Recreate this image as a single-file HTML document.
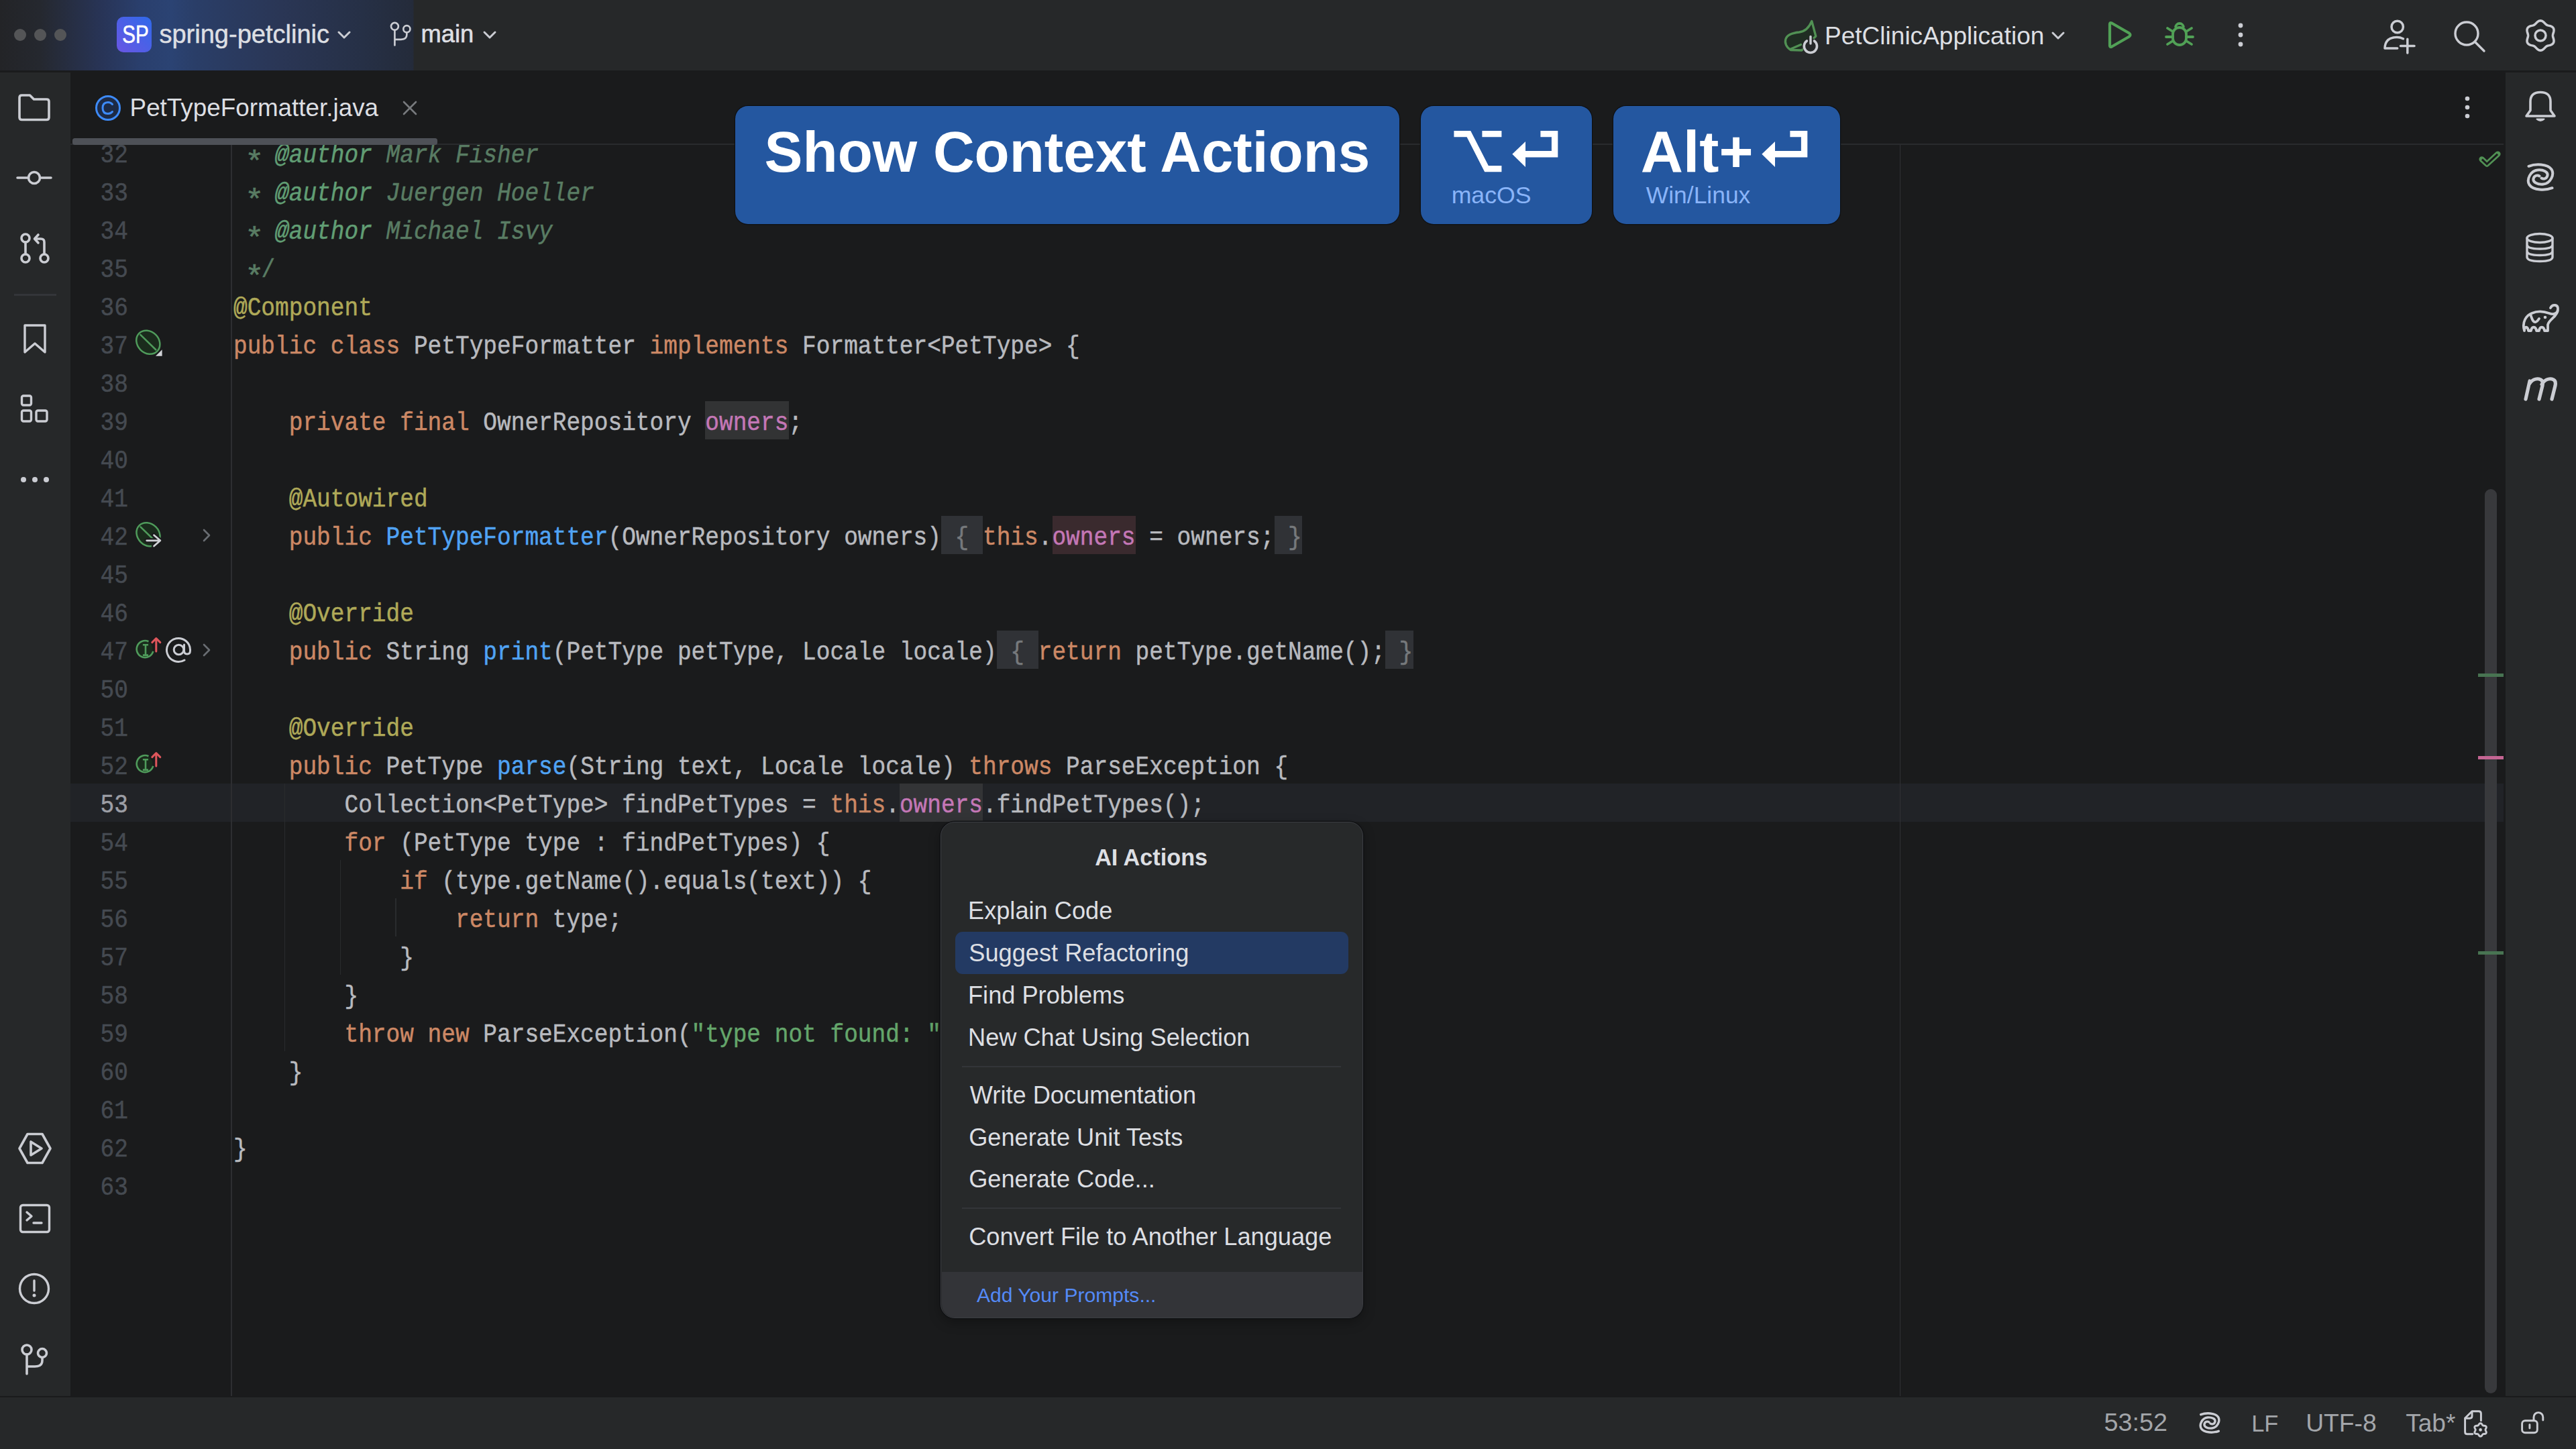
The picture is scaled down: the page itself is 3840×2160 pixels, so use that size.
<!DOCTYPE html>
<html><head><meta charset="utf-8"><title>IntelliJ IDEA - AI Actions</title>
<style>
html,body{margin:0;padding:0;width:3840px;height:2160px;overflow:hidden;background:#1a1b1c;}
.b{position:absolute;}
.t{position:absolute;white-space:pre;font-family:"Liberation Sans",sans-serif;}
.mono{font-family:"Liberation Mono",monospace;font-size:34.478px;line-height:57px;transform:scaleY(1.1);transform-origin:0 37.68px;-webkit-text-stroke:0.45px currentColor;}
.ic{position:absolute;overflow:visible;}
</style></head><body>
<div class="b" style="left:0px;top:0px;width:3840px;height:105px;background:#262829;"></div>
<div class="b" style="left:0px;top:0px;width:1000px;height:105px;background:linear-gradient(90deg,#232427 0px,#25282f 60px,#283456 150px,#2a3f6d 210px,#2b4373 255px,#2a3e68 290px,#2a3655 420px,#263046 540px,#242b3a 616px,#262829 617px,#262829 1000px);"></div>
<div class="b" style="left:0px;top:105px;width:3840px;height:3px;background:#1a1b1c;"></div>
<div class="b" style="left:0px;top:108px;width:105px;height:1973px;background:#262829;"></div>
<div class="b" style="left:3735px;top:108px;width:105px;height:1973px;background:#262829;"></div>
<div class="b" style="left:0px;top:2081px;width:3840px;height:2px;background:#1a1b1c;"></div>
<div class="b" style="left:0px;top:2083px;width:3840px;height:77px;background:#262829;"></div>
<div class="b" style="left:21px;top:43px;width:18px;height:18px;border-radius:50%;background:#545557"></div>
<div class="b" style="left:51px;top:43px;width:18px;height:18px;border-radius:50%;background:#545557"></div>
<div class="b" style="left:81px;top:43px;width:18px;height:18px;border-radius:50%;background:#545557"></div>
<div class="b" style="left:174px;top:25px;width:52px;height:53px;background:linear-gradient(45deg,#6a56e3 0%,#2f6aea 100%);border-radius:10px;"></div>
<div class="t" style="left:182.34px;top:30.35px;font-family:'Liberation Sans', sans-serif;font-weight:400;font-size:36.50px;line-height:44px;color:#ffffff;-webkit-text-stroke:0.6px #ffffff;transform:scaleX(0.8092);transform-origin:1.66px 0;">SP</div>
<div class="t" style="left:237.44px;top:27.82px;font-family:'Liberation Sans', sans-serif;font-weight:400;font-size:38.02px;line-height:46px;color:#dddfe3;-webkit-text-stroke:0.5px #dddfe3;">spring-petclinic</div>
<svg class="ic" style="left:501.0px;top:40.0px;width:24px;height:24px;" viewBox="0 0 24 24"><path d="M4 8l8 8 8-8" fill="none" stroke="#cbcdd3" stroke-width="3.0" stroke-linecap="round" stroke-linejoin="round"/></svg>
<svg class="ic" style="left:572.0px;top:26.0px;width:50px;height:50px;" viewBox="0 0 50 50"><g transform="translate(25 25) scale(0.78) translate(-25 -25)"><circle cx="14" cy="10" r="7" fill="none" stroke="#cbcdd3" stroke-width="3.4" stroke-linecap="round" stroke-linejoin="round"/><circle cx="37" cy="15" r="6.5" fill="none" stroke="#cbcdd3" stroke-width="3.4" stroke-linecap="round" stroke-linejoin="round"/><path d="M14 17v29M14 35h12q11 0 11-9v-4.5" fill="none" stroke="#cbcdd3" stroke-width="3.4" stroke-linecap="round" stroke-linejoin="round"/></g></svg>
<div class="t" style="left:627.59px;top:29.40px;font-family:'Liberation Sans', sans-serif;font-weight:400;font-size:36.34px;line-height:44px;color:#dddfe3;-webkit-text-stroke:0.6px #dddfe3;">main</div>
<svg class="ic" style="left:718.0px;top:40.0px;width:24px;height:24px;" viewBox="0 0 24 24"><path d="M4 8l8 8 8-8" fill="none" stroke="#cbcdd3" stroke-width="3.0" stroke-linecap="round" stroke-linejoin="round"/></svg>
<div class="t" style="left:2719.96px;top:31.15px;font-family:'Liberation Sans', sans-serif;font-weight:400;font-size:37.05px;line-height:44px;color:#dddfe3;">PetClinicApplication</div>
<svg class="ic" style="left:3056.0px;top:41.0px;width:24px;height:24px;" viewBox="0 0 24 24"><path d="M4 8l8 8 8-8" fill="none" stroke="#cbcdd3" stroke-width="3.0" stroke-linecap="round" stroke-linejoin="round"/></svg>
<svg class="ic" style="left:2652px;top:24px;width:66px;height:62px;" viewBox="0 0 66 62"><path d="M34 51 L17.5 50.5 C 11 47, 8 40, 10 34 C 12 28, 20 25, 30 24 C 38 23, 44 19, 48.8 7.5 L 54.8 30 L 44 40 Z" fill="#1f2d22" stroke="#519154" stroke-width="3.3" stroke-linejoin="round"/><path d="M17.5 49 L32.5 42.5" stroke="#519154" stroke-width="3.3" stroke-linecap="round"/><circle cx="46.9" cy="44.9" r="12" fill="#262829"/><path d="M41.4 37 A9.6 9.6 0 1 0 52.4 37" fill="none" stroke="#cbcdd3" stroke-width="3.6" stroke-linecap="round"/><path d="M47 30.5 V41" stroke="#262829" stroke-width="7"/><path d="M47 30.5 V41" stroke="#cbcdd3" stroke-width="3.4" stroke-linecap="round"/></svg>
<svg class="ic" style="left:3136px;top:28px;width:46px;height:48px;" viewBox="0 0 46 48"><path d="M9 8 Q9 5 12 6.5 L38 21.5 Q41 24 38 26.5 L12 41.5 Q9 43 9 40 Z" fill="none" stroke="#51a156" stroke-width="4.2" stroke-linejoin="round"/></svg>
<svg class="ic" style="left:3225px;top:30px;width:48px;height:42px;" viewBox="0 0 48 42"><path d="M18 11 a6 6 0 0 1 12 0" fill="none" stroke="#51a156" stroke-width="3.8"/><rect x="14" y="11" width="20" height="26" rx="10" fill="none" stroke="#51a156" stroke-width="3.8"/><path d="M14 17 L6 12 M34 17 L42 12 M14 25 H4 M34 25 H44 M14 31 L6 36 M34 31 L42 36" fill="none" stroke="#51a156" stroke-width="3.8" stroke-linecap="round"/></svg>
<svg class="ic" style="left:3316.0px;top:28.0px;width:48px;height:48px;" viewBox="0 0 48 48"><circle cx="24" cy="10" r="3.4" fill="#cbcdd3"/><circle cx="24" cy="24" r="3.4" fill="#cbcdd3"/><circle cx="24" cy="38" r="3.4" fill="#cbcdd3"/></svg>
<svg class="ic" style="left:3550px;top:28px;width:56px;height:56px;" viewBox="0 0 56 56"><circle cx="23.7" cy="12" r="8.7" fill="none" stroke="#cbcdd3" stroke-width="3.5" stroke-linecap="round" stroke-linejoin="round"/><path d="M32.4 29.8 Q28 27.5 23 27.5 Q5.5 27.5 5 44 H23.7" fill="none" stroke="#cbcdd3" stroke-width="3.5" stroke-linecap="round" stroke-linejoin="round"/><path d="M38.8 30.3 V51 M28.5 40.6 H49" fill="none" stroke="#cbcdd3" stroke-width="3.5" stroke-linecap="round" stroke-linejoin="round"/></svg>
<svg class="ic" style="left:3655px;top:28px;width:56px;height:56px;" viewBox="0 0 56 56"><circle cx="22" cy="22" r="17" fill="none" stroke="#cbcdd3" stroke-width="3.4" stroke-linecap="round" stroke-linejoin="round"/><path d="M35 35l13 13" fill="none" stroke="#cbcdd3" stroke-width="3.4" stroke-linecap="round" stroke-linejoin="round"/></svg>
<svg class="ic" style="left:3760px;top:26px;width:54px;height:54px;" viewBox="0 0 54 54"><path d="M45.40 27.00 L45.47 27.97 L45.66 28.96 L45.95 30.00 L46.28 31.10 L46.61 32.25 L46.86 33.45 L46.99 34.68 L46.95 35.88 L46.70 37.04 L46.23 38.10 L45.54 39.04 L44.67 39.84 L43.64 40.48 L42.52 40.98 L41.35 41.35 L40.19 41.65 L39.07 41.91 L38.03 42.18 L37.07 42.51 L36.20 42.93 L35.40 43.48 L34.63 44.14 L33.87 44.91 L33.09 45.75 L32.25 46.61 L31.34 47.43 L30.35 48.15 L29.28 48.72 L28.16 49.08 L27.00 49.20 L25.84 49.08 L24.72 48.72 L23.65 48.15 L22.66 47.43 L21.75 46.61 L20.91 45.75 L20.13 44.91 L19.37 44.14 L18.60 43.48 L17.80 42.93 L16.93 42.51 L15.97 42.18 L14.93 41.91 L13.81 41.65 L12.65 41.35 L11.48 40.98 L10.36 40.48 L9.33 39.84 L8.46 39.04 L7.77 38.10 L7.30 37.04 L7.05 35.88 L7.01 34.68 L7.14 33.45 L7.39 32.25 L7.72 31.10 L8.05 30.00 L8.34 28.96 L8.53 27.97 L8.60 27.00 L8.53 26.03 L8.34 25.04 L8.05 24.00 L7.72 22.90 L7.39 21.75 L7.14 20.55 L7.01 19.32 L7.05 18.12 L7.30 16.96 L7.77 15.90 L8.46 14.96 L9.33 14.16 L10.36 13.52 L11.48 13.02 L12.65 12.65 L13.81 12.35 L14.93 12.09 L15.97 11.82 L16.93 11.49 L17.80 11.07 L18.60 10.52 L19.37 9.86 L20.13 9.09 L20.91 8.25 L21.75 7.39 L22.66 6.57 L23.65 5.85 L24.72 5.28 L25.84 4.92 L27.00 4.80 L28.16 4.92 L29.28 5.28 L30.35 5.85 L31.34 6.57 L32.25 7.39 L33.09 8.25 L33.87 9.09 L34.63 9.86 L35.40 10.52 L36.20 11.07 L37.07 11.49 L38.03 11.82 L39.07 12.09 L40.19 12.35 L41.35 12.65 L42.52 13.02 L43.64 13.52 L44.67 14.16 L45.54 14.96 L46.23 15.90 L46.70 16.96 L46.95 18.12 L46.99 19.32 L46.86 20.55 L46.61 21.75 L46.28 22.90 L45.95 24.00 L45.66 25.04 L45.47 26.03Z" fill="none" stroke="#cbcdd3" stroke-width="3.5" stroke-linecap="round" stroke-linejoin="round"/><circle cx="27" cy="27" r="8" fill="none" stroke="#cbcdd3" stroke-width="3.5" stroke-linecap="round" stroke-linejoin="round"/></svg>
<svg class="ic" style="left:25.5px;top:137.5px;width:52px;height:52px;" viewBox="0 0 52 52"><path d="M3 7.5 q0-3.5 3.5-3.5 h12 l6 6 h19 q3.5 0 3.5 3.5 v23.5 q0 3.5-3.5 3.5 h-37 q-3.5 0-3.5-3.5 z" fill="none" stroke="#cbcdd3" stroke-width="3.6" stroke-linecap="round" stroke-linejoin="round"/></svg>
<svg class="ic" style="left:25.0px;top:239.0px;width:52px;height:52px;" viewBox="0 0 52 52"><circle cx="26" cy="26" r="8.5" fill="none" stroke="#cbcdd3" stroke-width="3.6" stroke-linecap="round" stroke-linejoin="round"/><path d="M1 26h16.5M34.5 26h16.5" fill="none" stroke="#cbcdd3" stroke-width="3.6" stroke-linecap="round" stroke-linejoin="round"/></svg>
<svg class="ic" style="left:26.0px;top:344.0px;width:52px;height:52px;" viewBox="0 0 52 52"><circle cx="12" cy="11" r="6" fill="none" stroke="#cbcdd3" stroke-width="3.6" stroke-linecap="round" stroke-linejoin="round"/><circle cx="12" cy="41" r="6" fill="none" stroke="#cbcdd3" stroke-width="3.6" stroke-linecap="round" stroke-linejoin="round"/><circle cx="40" cy="41" r="6" fill="none" stroke="#cbcdd3" stroke-width="3.6" stroke-linecap="round" stroke-linejoin="round"/><path d="M12 17v18M40 35v-18q0-5-5-5h-8M31 6l-5.5 6 5.5 6" fill="none" stroke="#cbcdd3" stroke-width="3.6" stroke-linecap="round" stroke-linejoin="round"/></svg>
<div class="b" style="left:21px;top:438px;width:63px;height:3px;background:#333539;"></div>
<svg class="ic" style="left:27.5px;top:481.0px;width:48px;height:48px;" viewBox="0 0 48 48"><path d="M9 4h30v40l-15-13-15 13z" fill="none" stroke="#cbcdd3" stroke-width="3.4" stroke-linecap="round" stroke-linejoin="round"/></svg>
<svg class="ic" style="left:27.5px;top:586.0px;width:48px;height:48px;" viewBox="0 0 48 48"><rect x="4.5" y="4" width="14" height="14" rx="2.5" fill="none" stroke="#cbcdd3" stroke-width="3.4" stroke-linecap="round" stroke-linejoin="round"/><rect x="4.5" y="26" width="14" height="16" rx="2.5" fill="none" stroke="#cbcdd3" stroke-width="3.4" stroke-linecap="round" stroke-linejoin="round"/><rect x="26" y="26" width="16" height="16" rx="2.5" fill="none" stroke="#cbcdd3" stroke-width="3.4" stroke-linecap="round" stroke-linejoin="round"/></svg>
<svg class="ic" style="left:27.5px;top:691.0px;width:48px;height:48px;" viewBox="0 0 48 48"><circle cx="7" cy="24" r="4" fill="#cbcdd3"/><circle cx="24" cy="24" r="4" fill="#cbcdd3"/><circle cx="41" cy="24" r="4" fill="#cbcdd3"/></svg>
<svg class="ic" style="left:25.5px;top:1686.0px;width:52px;height:52px;" viewBox="0 0 52 52"><path d="M15 4.5h22l12 21.5-12 21.5h-22l-12-21.5z" fill="none" stroke="#cbcdd3" stroke-width="3.6" stroke-linecap="round" stroke-linejoin="round"/><path d="M20 16v20l16-10z" fill="none" stroke="#cbcdd3" stroke-width="3.6" stroke-linecap="round" stroke-linejoin="round"/></svg>
<svg class="ic" style="left:27.700000000000003px;top:1793.0px;width:48px;height:48px;" viewBox="0 0 48 48"><rect x="2.5" y="3.5" width="43" height="40" rx="3.5" fill="none" stroke="#cbcdd3" stroke-width="3.4" stroke-linecap="round" stroke-linejoin="round"/><path d="M12 14l7 6-7 6M22 30h12" fill="none" stroke="#cbcdd3" stroke-width="3.4" stroke-linecap="round" stroke-linejoin="round"/></svg>
<svg class="ic" style="left:26.700000000000003px;top:1897.0px;width:50px;height:50px;" viewBox="0 0 50 50"><circle cx="24" cy="24" r="21.5" fill="none" stroke="#cbcdd3" stroke-width="3.4" stroke-linecap="round" stroke-linejoin="round"/><path d="M24 12v15" fill="none" stroke="#cbcdd3" stroke-width="3.4" stroke-linecap="round" stroke-linejoin="round"/><circle cx="24" cy="34" r="2.5" fill="#cbcdd3"/></svg>
<svg class="ic" style="left:26.0px;top:2002.0px;width:50px;height:50px;" viewBox="0 0 50 50"><g transform="translate(25 25) scale(1.0) translate(-25 -25)"><circle cx="14" cy="10" r="7" fill="none" stroke="#cbcdd3" stroke-width="3.6" stroke-linecap="round" stroke-linejoin="round"/><circle cx="37" cy="15" r="6.5" fill="none" stroke="#cbcdd3" stroke-width="3.6" stroke-linecap="round" stroke-linejoin="round"/><path d="M14 17v29M14 35h12q11 0 11-9v-4.5" fill="none" stroke="#cbcdd3" stroke-width="3.6" stroke-linecap="round" stroke-linejoin="round"/></g></svg>
<svg class="ic" style="left:3762.0px;top:134.0px;width:50px;height:50px;" viewBox="0 0 50 50"><path d="M4 39h42l-6-8.5v-13q0-14-15-14t-15 14v13z" fill="none" stroke="#cbcdd3" stroke-width="3.6" stroke-linecap="round" stroke-linejoin="round"/><path d="M19.5 43.5q5.5 5 11 0z" fill="#cbcdd3" stroke="#cbcdd3" stroke-width="2" stroke-linejoin="round"/></svg>
<svg class="ic" style="left:3762.0px;top:239.0px;width:50px;height:50px;" viewBox="0 0 50 50"><g transform="translate(25 25) scale(1.0) translate(-21.5 -20.5)"><path d="M4 4.3 C 14 0.5, 32 0.5, 38 9 C 43 17, 36 30, 26 31 C 17 32, 10 28, 11 23 C 12 18, 17 17, 20 19 M39 36.7 C 29 40.5, 11 40.5, 5 32 C 0 24, 7 11, 17 10 C 26 9, 33 13, 32 18 C 31 23, 26 24, 23 22" fill="none" stroke="#cbcdd3" stroke-width="4.0" stroke-linecap="round" stroke-linejoin="round"/></g></svg>
<svg class="ic" style="left:3762.0px;top:345.0px;width:50px;height:50px;" viewBox="0 0 50 50"><ellipse cx="24" cy="10" rx="19" ry="6.5" fill="none" stroke="#cbcdd3" stroke-width="3.4" stroke-linecap="round" stroke-linejoin="round"/><path d="M5 10v28q0 6.5 19 6.5t19-6.5v-28M5 19.5q0 6.5 19 6.5t19-6.5M5 29q0 6.5 19 6.5t19-6.5" fill="none" stroke="#cbcdd3" stroke-width="3.4" stroke-linecap="round" stroke-linejoin="round"/></svg>
<svg class="ic" style="left:3750px;top:440px;width:74px;height:70px;" viewBox="0 0 74 70"><path d="M13 53 C 9 40, 16 30, 24 27 C 33 23, 42 24, 50 27 C 57 30, 63 27, 63 20 C 63 14, 55 13, 52 19 M63 22 C 62 32, 50 36, 48 44 L48 53 L43 53 C 42 46, 36 46, 35 53 L31 53 C 30 46, 24 46, 23 53 L19 53 C 18 46, 13 46, 13 53 M22 28 C 24 35, 26 41, 30 40 C 33 39, 34 36, 35 35" fill="none" stroke="#cbcdd3" stroke-width="3.8" stroke-linecap="round" stroke-linejoin="round"/><circle cx="44" cy="33" r="2.3" fill="#cbcdd3"/></svg>
<svg class="ic" style="left:3750px;top:440px;width:74px;height:170px;" viewBox="0 0 74 170"><path d="M15 155 L21 128 M20 133 C 24 126, 30 124, 35 125 C 40 126, 41 130, 40 135 L35 155 M39 133 C 43 126, 49 124, 54 125 C 59 126, 60 130, 59 135 L54 155" fill="none" stroke="#cbcdd3" stroke-width="5.2" stroke-linecap="round" stroke-linejoin="round"/></svg>
<div class="b" style="left:105.00px;top:108.00px;width:3630.00px;height:1973.00px;background:#1a1b1c;"></div>
<div class="b" style="left:105.00px;top:1168.00px;width:3627.00px;height:57.00px;background:#212327;"></div>
<div class="b" style="left:344.00px;top:216.00px;width:1.50px;height:1865.00px;background:#2d2e31;"></div>
<div class="b" style="left:2831.50px;top:216.00px;width:1.50px;height:1865.00px;background:#303134;"></div>
<svg class="ic" style="left:3685px;top:215px;width:50px;height:45px;" viewBox="0 0 50 45"><path d="M14.6 22.4 L22.2 29.5 L38.4 14.6" fill="none" stroke="#519154" stroke-width="8.4" stroke-linejoin="round" stroke-linecap="round"/><path d="M14.9 22.7 L22.2 29.5 L38.1 14.9" fill="none" stroke="#1a1b1c" stroke-width="3.0" stroke-linejoin="miter" stroke-linecap="butt"/></svg>
<div class="b" style="left:3703.50px;top:729.00px;width:18.50px;height:1348.00px;background:#38393c;border-radius:9px;"></div>
<div class="b" style="left:3694.00px;top:1003.50px;width:38.00px;height:5.00px;background:#487452;"></div>
<div class="b" style="left:3694.00px;top:1126.50px;width:38.00px;height:5.00px;background:#c46593;"></div>
<div class="b" style="left:3694.00px;top:1417.50px;width:38.00px;height:5.00px;background:#487452;"></div>
<div class="b" style="left:1051.46px;top:598.00px;width:124.14px;height:57.00px;background:#323334;"></div>
<div class="b" style="left:1403.19px;top:769.00px;width:62.07px;height:57.00px;background:#303236;"></div>
<div class="b" style="left:1568.71px;top:769.00px;width:124.14px;height:57.00px;background:#3a2a2e;"></div>
<div class="b" style="left:1899.75px;top:769.00px;width:41.38px;height:57.00px;background:#303236;"></div>
<div class="b" style="left:1485.95px;top:940.00px;width:62.07px;height:57.00px;background:#303236;"></div>
<div class="b" style="left:2065.27px;top:940.00px;width:41.38px;height:57.00px;background:#303236;"></div>
<div class="b" style="left:1341.12px;top:1168.00px;width:124.14px;height:57.00px;background:#333436;"></div>
<div class="b" style="left:423.76px;top:1168.00px;width:1.40px;height:399.00px;background:#292b2d;"></div>
<div class="b" style="left:506.52px;top:1282.00px;width:1.40px;height:171.00px;background:#292b2d;"></div>
<div class="b" style="left:589.28px;top:1339.00px;width:1.40px;height:57.00px;background:#292b2d;"></div>
<div class="t mono" style="left:149.62px;top:204.00px;color:#454a51">32</div>
<div class="t mono" style="left:348.00px;top:204.00px"><span style="color:#597c63;"> </span><span style="color:#597c63;display:inline-block;transform:translateY(10.5px) scale(1.38,1.15);">*</span><span style="color:#597c63;"> </span><span style="color:#619e74;font-style:italic;">@author</span><span style="color:#597c63;font-style:italic;"> Mark Fisher</span></div>
<div class="t mono" style="left:149.62px;top:261.00px;color:#454a51">33</div>
<div class="t mono" style="left:348.00px;top:261.00px"><span style="color:#597c63;"> </span><span style="color:#597c63;display:inline-block;transform:translateY(10.5px) scale(1.38,1.15);">*</span><span style="color:#597c63;"> </span><span style="color:#619e74;font-style:italic;">@author</span><span style="color:#597c63;font-style:italic;"> Juergen Hoeller</span></div>
<div class="t mono" style="left:149.62px;top:318.00px;color:#454a51">34</div>
<div class="t mono" style="left:348.00px;top:318.00px"><span style="color:#597c63;"> </span><span style="color:#597c63;display:inline-block;transform:translateY(10.5px) scale(1.38,1.15);">*</span><span style="color:#597c63;"> </span><span style="color:#619e74;font-style:italic;">@author</span><span style="color:#597c63;font-style:italic;"> Michael Isvy</span></div>
<div class="t mono" style="left:149.62px;top:375.00px;color:#454a51">35</div>
<div class="t mono" style="left:348.00px;top:375.00px"><span style="color:#597c63;"> </span><span style="color:#597c63;display:inline-block;transform:translateY(10.5px) scale(1.38,1.15);">*</span><span style="color:#597c63;">/</span></div>
<div class="t mono" style="left:149.62px;top:432.00px;color:#454a51">36</div>
<div class="t mono" style="left:348.00px;top:432.00px"><span style="color:#afa958;">@Component</span></div>
<div class="t mono" style="left:149.62px;top:489.00px;color:#454a51">37</div>
<div class="t mono" style="left:348.00px;top:489.00px"><span style="color:#cc8865;">public class </span><span style="color:#b8babf;">PetTypeFormatter </span><span style="color:#cc8865;">implements </span><span style="color:#b8babf;">Formatter&lt;PetType&gt; {</span></div>
<div class="t mono" style="left:149.62px;top:546.00px;color:#454a51">38</div>
<div class="t mono" style="left:149.62px;top:603.00px;color:#454a51">39</div>
<div class="t mono" style="left:348.00px;top:603.00px"><span style="color:#cc8865;">    private final </span><span style="color:#b8babf;">OwnerRepository </span><span style="color:#c477b6;">owners</span><span style="color:#b8babf;">;</span></div>
<div class="t mono" style="left:149.62px;top:660.00px;color:#454a51">40</div>
<div class="t mono" style="left:149.62px;top:717.00px;color:#454a51">41</div>
<div class="t mono" style="left:348.00px;top:717.00px"><span style="color:#afa958;">    @Autowired</span></div>
<div class="t mono" style="left:149.62px;top:774.00px;color:#454a51">42</div>
<div class="t mono" style="left:348.00px;top:774.00px"><span style="color:#cc8865;">    public </span><span style="color:#50a3f4;">PetTypeFormatter</span><span style="color:#b8babf;">(OwnerRepository owners)</span><span style="color:#76797c;"> { </span><span style="color:#cc8865;">this</span><span style="color:#b8babf;">.</span><span style="color:#c477b6;">owners</span><span style="color:#b8babf;"> = owners;</span><span style="color:#76797c;"> }</span></div>
<div class="t mono" style="left:149.62px;top:831.00px;color:#454a51">45</div>
<div class="t mono" style="left:149.62px;top:888.00px;color:#454a51">46</div>
<div class="t mono" style="left:348.00px;top:888.00px"><span style="color:#afa958;">    @Override</span></div>
<div class="t mono" style="left:149.62px;top:945.00px;color:#454a51">47</div>
<div class="t mono" style="left:348.00px;top:945.00px"><span style="color:#cc8865;">    public </span><span style="color:#b8babf;">String </span><span style="color:#50a3f4;">print</span><span style="color:#b8babf;">(PetType petType, Locale locale)</span><span style="color:#76797c;"> { </span><span style="color:#cc8865;">return </span><span style="color:#b8babf;">petType.getName();</span><span style="color:#76797c;"> }</span></div>
<div class="t mono" style="left:149.62px;top:1002.00px;color:#454a51">50</div>
<div class="t mono" style="left:149.62px;top:1059.00px;color:#454a51">51</div>
<div class="t mono" style="left:348.00px;top:1059.00px"><span style="color:#afa958;">    @Override</span></div>
<div class="t mono" style="left:149.62px;top:1116.00px;color:#454a51">52</div>
<div class="t mono" style="left:348.00px;top:1116.00px"><span style="color:#cc8865;">    public </span><span style="color:#b8babf;">PetType </span><span style="color:#50a3f4;">parse</span><span style="color:#b8babf;">(String text, Locale locale) </span><span style="color:#cc8865;">throws </span><span style="color:#b8babf;">ParseException {</span></div>
<div class="t mono" style="left:149.62px;top:1173.00px;color:#9c9ea5">53</div>
<div class="t mono" style="left:348.00px;top:1173.00px"><span style="color:#b8babf;">        Collection&lt;PetType&gt; findPetTypes = </span><span style="color:#cc8865;">this</span><span style="color:#b8babf;">.</span><span style="color:#c477b6;">owners</span><span style="color:#b8babf;">.findPetTypes();</span></div>
<div class="t mono" style="left:149.62px;top:1230.00px;color:#454a51">54</div>
<div class="t mono" style="left:348.00px;top:1230.00px"><span style="color:#cc8865;">        for </span><span style="color:#b8babf;">(PetType type : findPetTypes) {</span></div>
<div class="t mono" style="left:149.62px;top:1287.00px;color:#454a51">55</div>
<div class="t mono" style="left:348.00px;top:1287.00px"><span style="color:#cc8865;">            if </span><span style="color:#b8babf;">(type.getName().equals(text)) {</span></div>
<div class="t mono" style="left:149.62px;top:1344.00px;color:#454a51">56</div>
<div class="t mono" style="left:348.00px;top:1344.00px"><span style="color:#cc8865;">                return </span><span style="color:#b8babf;">type;</span></div>
<div class="t mono" style="left:149.62px;top:1401.00px;color:#454a51">57</div>
<div class="t mono" style="left:348.00px;top:1401.00px"><span style="color:#b8babf;">            }</span></div>
<div class="t mono" style="left:149.62px;top:1458.00px;color:#454a51">58</div>
<div class="t mono" style="left:348.00px;top:1458.00px"><span style="color:#b8babf;">        }</span></div>
<div class="t mono" style="left:149.62px;top:1515.00px;color:#454a51">59</div>
<div class="t mono" style="left:348.00px;top:1515.00px"><span style="color:#cc8865;">        throw new </span><span style="color:#b8babf;">ParseException(</span><span style="color:#64a66b;">&quot;type not found: &quot;</span></div>
<div class="t mono" style="left:149.62px;top:1572.00px;color:#454a51">60</div>
<div class="t mono" style="left:348.00px;top:1572.00px"><span style="color:#b8babf;">    }</span></div>
<div class="t mono" style="left:149.62px;top:1629.00px;color:#454a51">61</div>
<div class="t mono" style="left:149.62px;top:1686.00px;color:#454a51">62</div>
<div class="t mono" style="left:348.00px;top:1686.00px"><span style="color:#b8babf;">}</span></div>
<div class="t mono" style="left:149.62px;top:1743.00px;color:#454a51">63</div>
<svg class="ic" style="left:190px;top:484.0px;width:60px;height:57px;" viewBox="0 0 60 57"><ellipse cx="30.8" cy="26.2" rx="19" ry="16" transform="rotate(45 30.8 26.2)" fill="#1a2b1c" stroke="#4f9b5b" stroke-width="2.5"/><path d="M18.700000000000003 14.399999999999999 L43.0 38.0" stroke="#4f9b5b" stroke-width="2.5"/><path d="M42 46.8 L51.6 37.3 V46.8 Z" fill="#d1d3d7" stroke="#1a1b1c" stroke-width="1.5" paint-order="stroke"/></svg>
<svg class="ic" style="left:190px;top:769.0px;width:60px;height:57px;" viewBox="0 0 60 57"><ellipse cx="31" cy="27.7" rx="19" ry="16" transform="rotate(45 31 27.7)" fill="#1a2b1c" stroke="#4f9b5b" stroke-width="2.5"/><path d="M18.9 15.899999999999999 L43.2 39.5" stroke="#4f9b5b" stroke-width="2.5"/><path d="M28.7 36.8 H48.9 M39.5 28.7 L48.9 36.8 L39.5 45.1" fill="none" stroke="#1a1b1c" stroke-width="7" stroke-linecap="round" stroke-linejoin="round"/><path d="M28.7 36.8 H48.9 M39.5 28.7 L48.9 36.8 L39.5 45.1" fill="none" stroke="#d1d3d7" stroke-width="2.7" stroke-linecap="round" stroke-linejoin="round"/></svg>
<svg class="ic" style="left:296.0px;top:785.5px;width:24px;height:24px;" viewBox="0 0 24 24"><path d="M8 4l8 8-8 8" fill="none" stroke="#696d72" stroke-width="2.6" stroke-linecap="round" stroke-linejoin="round"/></svg>
<svg class="ic" style="left:296.0px;top:956.5px;width:24px;height:24px;" viewBox="0 0 24 24"><path d="M8 4l8 8-8 8" fill="none" stroke="#696d72" stroke-width="2.6" stroke-linecap="round" stroke-linejoin="round"/></svg>
<svg class="ic" style="left:190px;top:940.0px;width:60px;height:57px;" viewBox="0 0 60 57"><circle cx="26.2" cy="27.6" r="11.5" fill="#1a2b1c"/><path d="M38.27 30.84 A12.5 12.5 0 1 1 31.48 16.27" fill="none" stroke="#4f9b5b" stroke-width="2.6"/><path d="M22.9 21.3 H31 M22.9 36.6 H31 M27 21.3 V36.6" fill="none" stroke="#4f9b5b" stroke-width="2.6"/><path d="M42.8 31 V11.8 M36.8 17.6 L42.8 11.5 L48.8 17.6" fill="none" stroke="#de565b" stroke-width="3" stroke-linecap="round" stroke-linejoin="round"/></svg>
<svg class="ic" style="left:190px;top:1111.0px;width:60px;height:57px;" viewBox="0 0 60 57"><circle cx="26.2" cy="27.6" r="11.5" fill="#1a2b1c"/><path d="M38.27 30.84 A12.5 12.5 0 1 1 31.48 16.27" fill="none" stroke="#4f9b5b" stroke-width="2.6"/><path d="M22.9 21.3 H31 M22.9 36.6 H31 M27 21.3 V36.6" fill="none" stroke="#4f9b5b" stroke-width="2.6"/><path d="M42.8 31 V11.8 M36.8 17.6 L42.8 11.5 L48.8 17.6" fill="none" stroke="#de565b" stroke-width="3" stroke-linecap="round" stroke-linejoin="round"/></svg>
<svg class="ic" style="left:244px;top:945.0px;width:46px;height:46px;" viewBox="0 0 46 46"><path d="M31 39 A17.5 17.5 0 1 1 39.5 23.5 V25 Q39.5 30 35 30 Q30.5 30 30.5 25 V16" fill="none" stroke="#cbcdd3" stroke-width="3" stroke-linecap="round"/><circle cx="22.5" cy="23.5" r="7.3" fill="none" stroke="#cbcdd3" stroke-width="3"/></svg>
<div class="b" style="left:105.00px;top:108.00px;width:3630.00px;height:106.00px;background:#1a1b1c;"></div>
<div class="b" style="left:105.00px;top:214.00px;width:3627.00px;height:1.50px;background:#292b2d;"></div>
<div class="b" style="left:108.00px;top:205.50px;width:544.00px;height:10.50px;background:#4e5157;border-radius:3.5px;"></div>
<svg class="ic" style="left:141px;top:141px;width:40px;height:40px;" viewBox="0 0 40 40"><circle cx="20" cy="20" r="17.5" fill="#1d2a45" stroke="#3d8af7" stroke-width="3"/><path d="M26.5 14.5 q-2.5-3-6.5-3 q-8 0-8 8.5 q0 8.5 8 8.5 q4 0 6.5-3" fill="none" stroke="#3d8af7" stroke-width="3" stroke-linecap="round"/></svg>
<div class="t" style="left:193.58px;top:139.22px;font-family:'Liberation Sans', sans-serif;font-weight:400;font-size:36.85px;line-height:44px;color:#dddfe3;">PetTypeFormatter.java</div>
<svg class="ic" style="left:598px;top:148px;width:26px;height:26px;" viewBox="0 0 26 26"><path d="M4 4l18 18M22 4L4 22" stroke="#777a7d" stroke-width="2.6" stroke-linecap="round"/></svg>
<svg class="ic" style="left:3654.0px;top:136.0px;width:48px;height:48px;" viewBox="0 0 48 48"><circle cx="24" cy="11" r="3.3" fill="#cbcdd3"/><circle cx="24" cy="24" r="3.3" fill="#cbcdd3"/><circle cx="24" cy="37" r="3.3" fill="#cbcdd3"/></svg>
<div class="b" style="left:1096.00px;top:158.00px;width:990.00px;height:176.00px;background:#2457a0;border-radius:19px;box-shadow:0 0 0 1.2px #0f1012;"></div>
<div class="b" style="left:2118.00px;top:158.00px;width:255.00px;height:176.00px;background:#2457a0;border-radius:19px;box-shadow:0 0 0 1.2px #0f1012;"></div>
<div class="b" style="left:2405.00px;top:158.00px;width:338.00px;height:176.00px;background:#2457a0;border-radius:19px;box-shadow:0 0 0 1.2px #0f1012;"></div>
<div class="t" style="left:1139.54px;top:176.40px;font-family:'Liberation Sans', sans-serif;font-weight:700;font-size:85.38px;line-height:102px;color:#ffffff;">Show Context Actions</div>
<svg class="ic" style="left:2150px;top:180px;width:100px;height:90px;" viewBox="0 0 100 90"><path d="M17.4 19.6 H39.4 L66 71.7 H88.4 M59.4 19.6 H88.4" fill="none" stroke="#ffffff" stroke-width="9.2" stroke-linejoin="miter"/></svg>
<svg class="ic" style="left:2240px;top:180px;width:100px;height:90px;" viewBox="0 0 100 90"><path d="M56.4 19.6 H77.6 V49.8 H34" fill="none" stroke="#ffffff" stroke-width="9.4" stroke-linejoin="miter"/><path d="M14.3 49.8 L34 31 V69 Z" fill="#ffffff"/></svg>
<div class="t" style="left:2163.63px;top:270.12px;font-family:'Liberation Sans', sans-serif;font-weight:400;font-size:35.70px;line-height:43px;color:#8ab4f8;">macOS</div>
<div class="t" style="left:2445.82px;top:174.17px;font-family:'Liberation Sans', sans-serif;font-weight:700;font-size:87.49px;line-height:105px;color:#ffffff;">Alt+</div>
<svg class="ic" style="left:2612px;top:180px;width:100px;height:90px;" viewBox="0 0 100 90"><path d="M56.4 19.6 H77.6 V49.8 H34" fill="none" stroke="#ffffff" stroke-width="9.4" stroke-linejoin="miter"/><path d="M14.3 49.8 L34 31 V69 Z" fill="#ffffff"/></svg>
<div class="t" style="left:2453.84px;top:270.22px;font-family:'Liberation Sans', sans-serif;font-weight:400;font-size:35.42px;line-height:43px;color:#8ab4f8;">Win/Linux</div>
<div class="b" style="left:1402.00px;top:1225.00px;width:630.00px;height:740.00px;background:#27292a;border-radius:21px;border:1.2px solid #3b3d42;box-sizing:border-box;box-shadow:0 0 0 1.5px #111214,0 6px 18px rgba(0,0,0,0.30);overflow:hidden;"></div>
<div class="b" style="left:1403.50px;top:1896.00px;width:627.00px;height:67.50px;background:#333438;border-radius:0 0 20px 20px;"></div>
<div class="t" style="left:1632.15px;top:1257.63px;font-family:'Liberation Sans', sans-serif;font-weight:700;font-size:34.23px;line-height:41px;color:#dddfe3;">AI Actions</div>
<div class="b" style="left:1423.60px;top:1389.00px;width:586.40px;height:62.50px;background:#233a63;border-radius:11px;"></div>
<div class="t" style="left:1443.03px;top:1335.95px;font-family:'Liberation Sans', sans-serif;font-weight:400;font-size:36.20px;line-height:43px;color:#dddfe3;">Explain Code</div>
<div class="t" style="left:1444.36px;top:1398.95px;font-family:'Liberation Sans', sans-serif;font-weight:400;font-size:36.20px;line-height:43px;color:#dddfe3;">Suggest Refactoring</div>
<div class="t" style="left:1443.03px;top:1461.95px;font-family:'Liberation Sans', sans-serif;font-weight:400;font-size:36.20px;line-height:43px;color:#dddfe3;">Find Problems</div>
<div class="t" style="left:1443.03px;top:1524.55px;font-family:'Liberation Sans', sans-serif;font-weight:400;font-size:36.20px;line-height:43px;color:#dddfe3;">New Chat Using Selection</div>
<div class="t" style="left:1445.84px;top:1610.55px;font-family:'Liberation Sans', sans-serif;font-weight:400;font-size:36.20px;line-height:43px;color:#dddfe3;">Write Documentation</div>
<div class="t" style="left:1444.18px;top:1673.75px;font-family:'Liberation Sans', sans-serif;font-weight:400;font-size:36.20px;line-height:43px;color:#dddfe3;">Generate Unit Tests</div>
<div class="t" style="left:1444.18px;top:1735.95px;font-family:'Liberation Sans', sans-serif;font-weight:400;font-size:36.20px;line-height:43px;color:#dddfe3;">Generate Code...</div>
<div class="t" style="left:1444.16px;top:1821.95px;font-family:'Liberation Sans', sans-serif;font-weight:400;font-size:36.20px;line-height:43px;color:#dddfe3;">Convert File to Another Language</div>
<div class="b" style="left:1434.00px;top:1589.00px;width:565.00px;height:1.50px;background:#333539;"></div>
<div class="b" style="left:1434.00px;top:1800.00px;width:565.00px;height:1.50px;background:#333539;"></div>
<div class="t" style="left:1455.94px;top:1912.57px;font-family:'Liberation Sans', sans-serif;font-weight:400;font-size:30.08px;line-height:36px;color:#548af7;">Add Your Prompts...</div>
<div class="t" style="left:3136.49px;top:2098.42px;font-family:'Liberation Sans', sans-serif;font-weight:400;font-size:37.73px;line-height:45px;color:#a3a6aa;">53:52</div>
<svg class="ic" style="left:3269.0px;top:2096.0px;width:50px;height:50px;" viewBox="0 0 50 50"><g transform="translate(25 25) scale(0.76) translate(-21.5 -20.5)"><path d="M4 4.3 C 14 0.5, 32 0.5, 38 9 C 43 17, 36 30, 26 31 C 17 32, 10 28, 11 23 C 12 18, 17 17, 20 19 M39 36.7 C 29 40.5, 11 40.5, 5 32 C 0 24, 7 11, 17 10 C 26 9, 33 13, 32 18 C 31 23, 26 24, 23 22" fill="none" stroke="#cbcdd3" stroke-width="4.473684210526316" stroke-linecap="round" stroke-linejoin="round"/></g></svg>
<div class="t" style="left:3356.17px;top:2101.56px;font-family:'Liberation Sans', sans-serif;font-weight:400;font-size:34.45px;line-height:41px;color:#a3a6aa;">LF</div>
<div class="t" style="left:3437.13px;top:2098.59px;font-family:'Liberation Sans', sans-serif;font-weight:400;font-size:37.24px;line-height:45px;color:#a3a6aa;">UTF-8</div>
<div class="t" style="left:3586.17px;top:2098.63px;font-family:'Liberation Sans', sans-serif;font-weight:400;font-size:37.12px;line-height:45px;color:#a3a6aa;">Tab*</div>
<svg class="ic" style="left:3660px;top:2095px;width:150px;height:55px;" viewBox="0 0 150 55"><path d="M25.9 42.8 H18 Q14.6 42.8 14.6 39.4 V19 L25 8.7 H35 Q38.4 8.7 38.4 12 V22.7" fill="none" stroke="#cbcdd3" stroke-width="2.9" stroke-linecap="round" stroke-linejoin="round"/><path d="M25 9.5 V16 Q25 19.2 21.8 19.2 H15" fill="none" stroke="#cbcdd3" stroke-width="2.9" stroke-linecap="round" stroke-linejoin="round"/><path d="M45.00 36.40 L45.13 37.06 L45.48 37.79 L45.91 38.63 L46.25 39.55 L46.34 40.47 L46.09 41.30 L45.50 41.93 L44.65 42.31 L43.68 42.48 L42.74 42.53 L41.94 42.59 L41.30 42.81 L40.80 43.25 L40.34 43.92 L39.83 44.71 L39.20 45.46 L38.44 46.00 L37.60 46.20 L36.76 46.00 L36.00 45.46 L35.37 44.71 L34.86 43.92 L34.40 43.25 L33.90 42.81 L33.26 42.59 L32.46 42.53 L31.52 42.48 L30.55 42.31 L29.70 41.93 L29.11 41.30 L28.86 40.47 L28.95 39.55 L29.29 38.63 L29.72 37.79 L30.07 37.06 L30.20 36.40 L30.07 35.74 L29.72 35.01 L29.29 34.17 L28.95 33.25 L28.86 32.33 L29.11 31.50 L29.70 30.87 L30.55 30.49 L31.52 30.32 L32.46 30.27 L33.26 30.21 L33.90 29.99 L34.40 29.55 L34.86 28.88 L35.37 28.09 L36.00 27.34 L36.76 26.80 L37.60 26.60 L38.44 26.80 L39.20 27.34 L39.83 28.09 L40.34 28.88 L40.80 29.55 L41.30 29.99 L41.94 30.21 L42.74 30.27 L43.68 30.32 L44.65 30.49 L45.50 30.87 L46.09 31.50 L46.34 32.33 L46.25 33.25 L45.91 34.17 L45.48 35.01 L45.13 35.74Z" fill="none" stroke="#cbcdd3" stroke-width="2.9" stroke-linecap="round" stroke-linejoin="round"/><circle cx="37.6" cy="36.4" r="2.3" fill="#cbcdd3"/><rect x="99.6" y="22.7" width="22.7" height="18.1" rx="4.5" fill="none" stroke="#cbcdd3" stroke-width="2.9" stroke-linecap="round" stroke-linejoin="round"/><path d="M110.9 28.8 V34" fill="none" stroke="#cbcdd3" stroke-width="2.9" stroke-linecap="round" stroke-linejoin="round"/><path d="M117 22 V17.5 A6.9 6.9 0 0 1 130.8 17.5 V22.1" fill="none" stroke="#cbcdd3" stroke-width="2.9" stroke-linecap="round" stroke-linejoin="round"/></svg>
</body></html>
